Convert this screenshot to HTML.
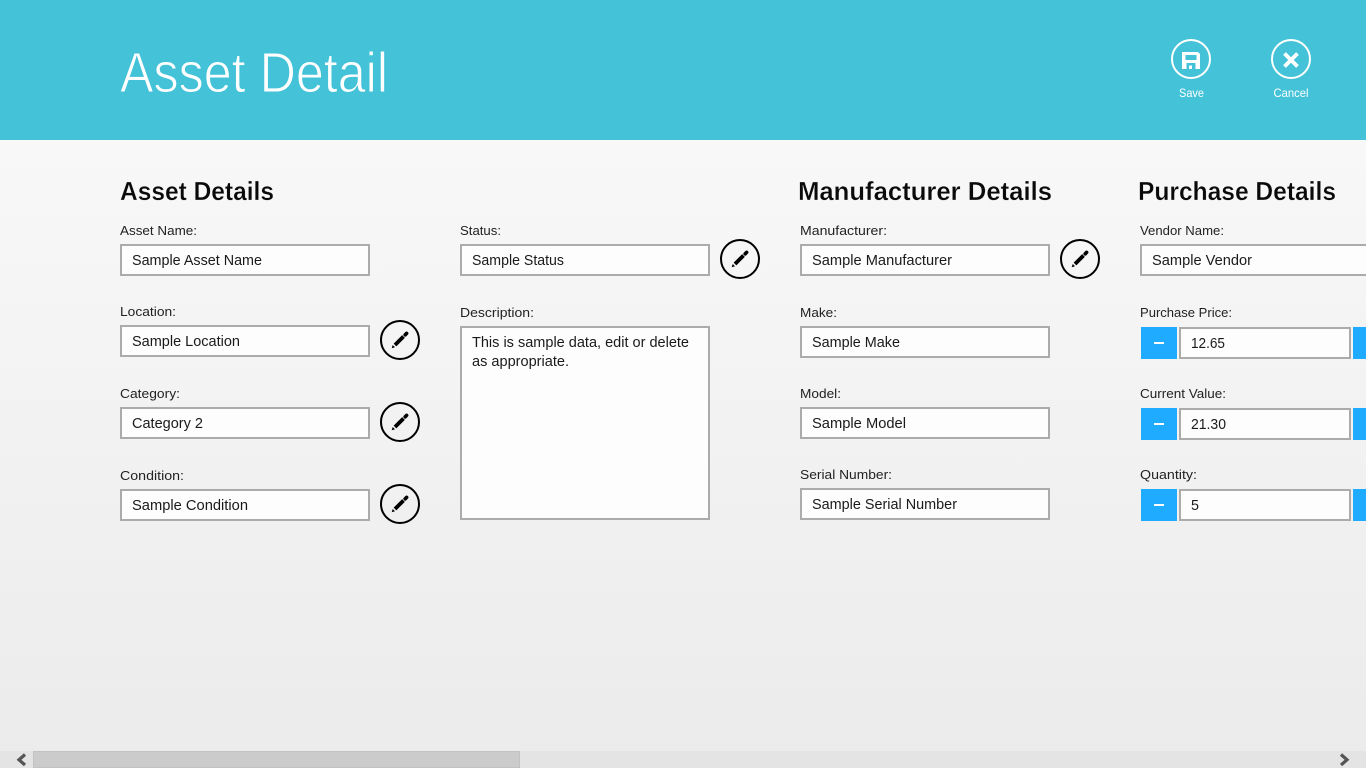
<!DOCTYPE html>
<html lang="en">
<head>
<meta charset="utf-8">
<title>Asset Detail</title>
<style>
html,body{margin:0;padding:0;width:1366px;height:768px;overflow:hidden;background:#f0f0f0}
svg{display:block;position:absolute;left:0;top:0}
text{font-family:"Liberation Sans",sans-serif;fill:#111}
.h{font-size:26px;font-weight:700;fill:#0a0a0a;stroke:#f6f6f6;stroke-width:.3px}
.l{font-size:13px;fill:#222}
.v{font-size:14.500px;fill:#1a1a1a}
.t{font-size:57px;fill:#fff;stroke:#43c2d8;stroke-width:1.100px}
.c{font-size:12px;fill:#fff}
.b{fill:#fdfdfd;stroke:#ababab;stroke-width:2}
.r{fill:none;stroke:#000;stroke-width:2}
</style>
</head>
<body>
<svg width="1366" height="768" viewBox="0 0 1366 768" xmlns="http://www.w3.org/2000/svg">
<defs>
<linearGradient id="g" x1="0" y1="0" x2="0" y2="1"><stop offset="0" stop-color="#f8f8f8"/><stop offset="1" stop-color="#ebebeb"/></linearGradient>
</defs>
<rect x="0" y="140" width="1366" height="628" fill="url(#g)"/>
<rect x="0" y="0" width="1366" height="140" fill="#43c2d8"/>

<text class="t" x="120" y="92" textLength="268" lengthAdjust="spacingAndGlyphs">Asset Detail</text>

<circle cx="1191" cy="59" r="19" fill="none" stroke="#fff" stroke-width="2"/>
<path fill="#fff" fill-rule="evenodd" d="M1182 52H1198L1200 54V69H1182ZM1185.500 55V60H1196.500V55ZM1186.500 63V69H1195.500V63ZM1189 65.500H1192V69H1189Z"/>
<text class="c" x="1179" y="97" textLength="25" lengthAdjust="spacingAndGlyphs">Save</text>

<circle cx="1291" cy="59" r="19" fill="none" stroke="#fff" stroke-width="2"/>
<path d="M1284.500 53.500L1297.500 66.500M1297.500 53.500L1284.500 66.500" stroke="#fff" stroke-width="3.800" fill="none"/>
<text class="c" x="1273.500" y="97" textLength="35" lengthAdjust="spacingAndGlyphs">Cancel</text>

<text class="h" x="120" y="200" textLength="154" lengthAdjust="spacingAndGlyphs">Asset Details</text>
<text class="h" x="798" y="200" textLength="254" lengthAdjust="spacingAndGlyphs">Manufacturer Details</text>
<text class="h" x="1138" y="200" textLength="198" lengthAdjust="spacingAndGlyphs">Purchase Details</text>

<text class="l" x="120" y="235" textLength="77" lengthAdjust="spacingAndGlyphs">Asset Name:</text>
<text class="l" x="120" y="316" textLength="56" lengthAdjust="spacingAndGlyphs">Location:</text>
<text class="l" x="120" y="398" textLength="60" lengthAdjust="spacingAndGlyphs">Category:</text>
<text class="l" x="120" y="480" textLength="64" lengthAdjust="spacingAndGlyphs">Condition:</text>
<text class="l" x="460" y="235" textLength="41" lengthAdjust="spacingAndGlyphs">Status:</text>
<text class="l" x="460" y="317" textLength="74" lengthAdjust="spacingAndGlyphs">Description:</text>
<text class="l" x="800" y="235" textLength="87" lengthAdjust="spacingAndGlyphs">Manufacturer:</text>
<text class="l" x="800" y="317" textLength="37" lengthAdjust="spacingAndGlyphs">Make:</text>
<text class="l" x="800" y="398" textLength="41" lengthAdjust="spacingAndGlyphs">Model:</text>
<text class="l" x="800" y="479" textLength="92" lengthAdjust="spacingAndGlyphs">Serial Number:</text>
<text class="l" x="1140" y="235" textLength="84" lengthAdjust="spacingAndGlyphs">Vendor Name:</text>
<text class="l" x="1140" y="317" textLength="92" lengthAdjust="spacingAndGlyphs">Purchase Price:</text>
<text class="l" x="1140" y="398" textLength="86" lengthAdjust="spacingAndGlyphs">Current Value:</text>
<text class="l" x="1140" y="479" textLength="57" lengthAdjust="spacingAndGlyphs">Quantity:</text>

<rect class="b" x="121" y="245" width="248" height="30"/>
<rect class="b" x="121" y="326" width="248" height="30"/>
<rect class="b" x="121" y="408" width="248" height="30"/>
<rect class="b" x="121" y="490" width="248" height="30"/>
<rect class="b" x="461" y="245" width="248" height="30"/>
<rect class="b" x="461" y="327" width="248" height="192"/>
<rect class="b" x="801" y="245" width="248" height="30"/>
<rect class="b" x="801" y="327" width="248" height="30"/>
<rect class="b" x="801" y="408" width="248" height="30"/>
<rect class="b" x="801" y="489" width="248" height="30"/>
<rect class="b" x="1141" y="245" width="248" height="30"/>
<rect class="b" x="1180" y="328" width="170" height="30"/>
<rect class="b" x="1180" y="409" width="170" height="30"/>
<rect class="b" x="1180" y="490" width="170" height="30"/>

<g fill="#1fabff">
<rect x="1141" y="327" width="36" height="32"/>
<rect x="1141" y="408" width="36" height="32"/>
<rect x="1141" y="489" width="36" height="32"/>
<rect x="1353" y="327" width="13" height="32"/>
<rect x="1353" y="408" width="13" height="32"/>
<rect x="1353" y="489" width="13" height="32"/>
</g>
<g fill="#fff">
<rect x="1154" y="342" width="10" height="2"/>
<rect x="1154" y="423" width="10" height="2"/>
<rect x="1154" y="504" width="10" height="2"/>
</g>

<text class="v" x="132" y="265" textLength="130" lengthAdjust="spacingAndGlyphs">Sample Asset Name</text>
<text class="v" x="132" y="346" textLength="108" lengthAdjust="spacingAndGlyphs">Sample Location</text>
<text class="v" x="132" y="428" textLength="71" lengthAdjust="spacingAndGlyphs">Category 2</text>
<text class="v" x="132" y="510" textLength="116" lengthAdjust="spacingAndGlyphs">Sample Condition</text>
<text class="v" x="472" y="265" textLength="92" lengthAdjust="spacingAndGlyphs">Sample Status</text>
<text class="v" x="472" y="347" textLength="217" lengthAdjust="spacingAndGlyphs">This is sample data, edit or delete</text>
<text class="v" x="472" y="366" textLength="97" lengthAdjust="spacingAndGlyphs">as appropriate.</text>
<text class="v" x="812" y="265" textLength="140" lengthAdjust="spacingAndGlyphs">Sample Manufacturer</text>
<text class="v" x="812" y="347" textLength="88" lengthAdjust="spacingAndGlyphs">Sample Make</text>
<text class="v" x="812" y="428" textLength="94" lengthAdjust="spacingAndGlyphs">Sample Model</text>
<text class="v" x="812" y="509" textLength="145" lengthAdjust="spacingAndGlyphs">Sample Serial Number</text>
<text class="v" x="1152" y="265" textLength="100" lengthAdjust="spacingAndGlyphs">Sample Vendor</text>
<text class="v" x="1191" y="348" textLength="34" lengthAdjust="spacingAndGlyphs">12.65</text>
<text class="v" x="1191" y="429" textLength="35" lengthAdjust="spacingAndGlyphs">21.30</text>
<text class="v" x="1191" y="510" textLength="8" lengthAdjust="spacingAndGlyphs">5</text>

<g transform="translate(400 340)"><circle class="r" r="19"/><path d="M-5 5L3.500 -3.500" stroke="#000" stroke-width="3.800"/><path d="M5.200 -5.200L6.600 -6.600" stroke="#000" stroke-width="3.600" stroke-linecap="round"/><path d="M-8.300 8.300L-7.300 5L-5 7.300Z" fill="#000"/></g>
<g transform="translate(400 422)"><circle class="r" r="19"/><path d="M-5 5L3.500 -3.500" stroke="#000" stroke-width="3.800"/><path d="M5.200 -5.200L6.600 -6.600" stroke="#000" stroke-width="3.600" stroke-linecap="round"/><path d="M-8.300 8.300L-7.300 5L-5 7.300Z" fill="#000"/></g>
<g transform="translate(400 504)"><circle class="r" r="19"/><path d="M-5 5L3.500 -3.500" stroke="#000" stroke-width="3.800"/><path d="M5.200 -5.200L6.600 -6.600" stroke="#000" stroke-width="3.600" stroke-linecap="round"/><path d="M-8.300 8.300L-7.300 5L-5 7.300Z" fill="#000"/></g>
<g transform="translate(740 259)"><circle class="r" r="19"/><path d="M-5 5L3.500 -3.500" stroke="#000" stroke-width="3.800"/><path d="M5.200 -5.200L6.600 -6.600" stroke="#000" stroke-width="3.600" stroke-linecap="round"/><path d="M-8.300 8.300L-7.300 5L-5 7.300Z" fill="#000"/></g>
<g transform="translate(1080 259)"><circle class="r" r="19"/><path d="M-5 5L3.500 -3.500" stroke="#000" stroke-width="3.800"/><path d="M5.200 -5.200L6.600 -6.600" stroke="#000" stroke-width="3.600" stroke-linecap="round"/><path d="M-8.300 8.300L-7.300 5L-5 7.300Z" fill="#000"/></g>

<rect x="0" y="751" width="1366" height="17" fill="#e4e4e4"/>
<rect x="33.500" y="751.500" width="486" height="16" fill="#cbcbcb" stroke="#c2c2c2"/>
<path d="M25 754.500L19 759.800L25 765" fill="none" stroke="#555" stroke-width="3.200"/>
<path d="M1341 754.500L1347 759.800L1341 765" fill="none" stroke="#555" stroke-width="3.200"/>
</svg>
</body>
</html>
